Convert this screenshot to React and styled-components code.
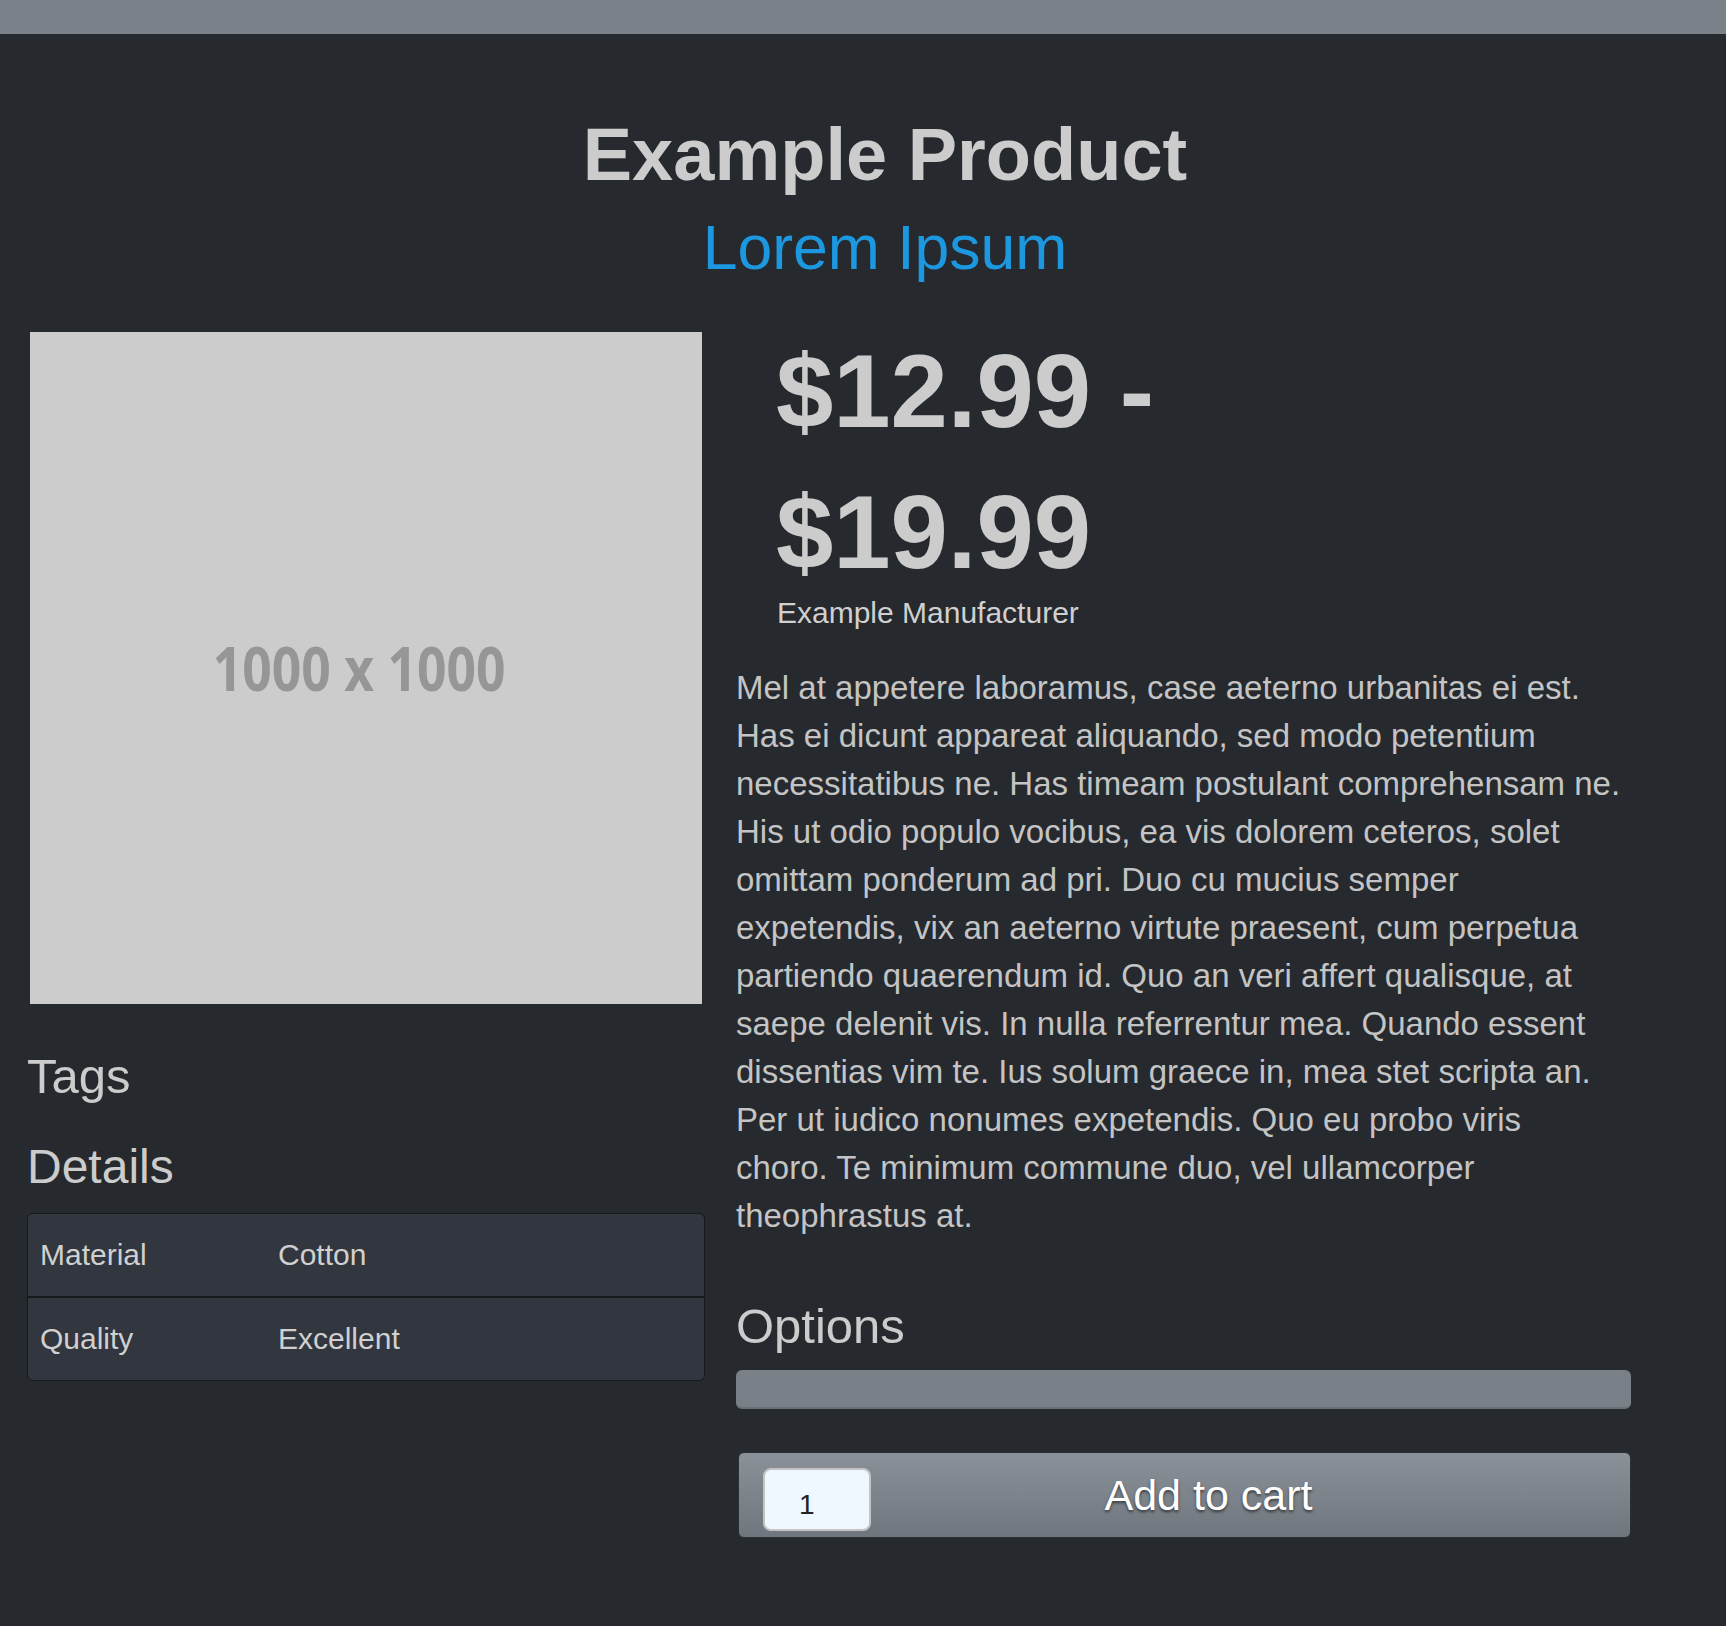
import styled, { createGlobalStyle } from "styled-components"

const GlobalStyle = createGlobalStyle`
html, body {
  margin:0;
  padding:0;
  background-color:#26292e;
}
body {
  font-family:"Liberation Sans", Arial, Helvetica, sans-serif;
  color:#cccccc;
}
`

const TopBar = styled.div`
height:34px;
background-color:#7b8189;
`

const Header = styled.header`
padding:81px 0 0 44px;
text-align:center;
`

const Title = styled.h1`
margin:0;
font-size:74px;
line-height:80px;
font-weight:700;
color:#cccccc;
`

const Subtitle = styled.h2`
margin:17px 0 0;
font-size:62.5px;
line-height:70px;
font-weight:400;
color:#1b98e0;
`

const Main = styled.main`
display:grid;
grid-template-columns:678px 895px;
column-gap:31px;
margin-top:39px;
padding:0 0 80px 27px;
`

const Column = styled.div`
display:flex;
flex-direction:column;
`

const ImageBox = styled.div`
width:672px;
height:672px;
margin:11px 0 0 3px;
background-color:#cccccc;
display:flex;
align-items:center;
justify-content:center;
`

const ImageLabel = styled.span`
display:inline-block;
margin-right:14px;
font-family:"Open Sans", sans-serif;
font-weight:700;
font-size:60px;
color:#969696;
transform:scaleX(0.86);
`

const SectionTitle = styled.h3`
margin:${({ $gap }) => $gap}px 0 0;
font-size:${({ $size }) => $size || 49}px;
line-height:54px;
font-weight:300;
color:#cccccc;
`

const Table = styled.div`
margin-top:19px;
border:1px solid #18191c;
border-radius:6px;
overflow:hidden;
background-color:#32363e;
`

const Row = styled.div`
display:grid;
grid-template-columns:238px 1fr;
height:82px;
line-height:82px;
font-size:30px;
color:#d0d0d0;
padding-left:12px;
& + & {
  border-top:2px solid #18191c;
}
`

const Price = styled.div`
max-width:420px;
padding-left:40px;
font-size:103px;
line-height:141px;
font-weight:700;
color:#cccccc;
`

const Maker = styled.div`
padding-left:41px;
font-size:30px;
line-height:20px;
color:#d0d0d0;
`

const Description = styled.p`
margin:41px 0 0;
font-size:33px;
line-height:48px;
color:#c4c4c4;
`

const Select = styled.div`
margin-top:17px;
height:37px;
border-radius:6px;
background-color:#7a8087;
border-bottom:2px solid #6a6f76;
`

const CartButton = styled.button`
margin-top:43px;
display:flex;
align-items:center;
height:86px;
width:893px;
margin-left:2px;
padding:0 0 0 24px;
border:1px solid #2c2f34;
border-radius:6px;
background:linear-gradient(to bottom, #8b9198, #70767d);
font-family:"Liberation Sans", Arial, sans-serif;
cursor:pointer;
`

const Qty = styled.input`
box-sizing:border-box;
width:108px;
height:63px;
margin-top:8px;
padding:12px 0 0 34px;
border:2px solid #c4c4c4;
border-radius:8px;
background-color:#eff7ff;
font-family:"Liberation Sans", Arial, sans-serif;
font-size:28px;
color:#222;
outline:none;
`

const CartLabel = styled.span`
flex:1;
padding-right:84px;
text-align:center;
font-size:43px;
color:#ffffff;
text-shadow:0 2px 3px rgba(0,0,0,0.55);
`

const details = [
    { name: "Material", value: "Cotton" },
    { name: "Quality", value: "Excellent" },
]

const textStart = "Mel at appetere laboramus, case aeterno urbanitas ei est. Has ei dicunt appareat aliquando, sed modo petentium necessitatibus ne. Has timeam postulant comprehensam ne. His ut odio populo vocibus, ea vis dolorem ceteros, solet omittam ponderum ad pri. Duo cu mucius semper expetendis, vix an aeterno virtute praesent, cum perpetua partiendo quaerendum id. Quo an veri affert qualisque, at saepe delenit vis. In nulla referrentur mea. Quando essent dissentias vim te. Ius solum graece in, mea stet scripta an. Per ut iudico nonumes expetendis. Quo eu probo viris"
const textEnd = "choro. Te minimum commune duo, vel ullamcorper theophrastus at."

export default function App() {
    return (
        <>
            <GlobalStyle />
            <TopBar />
            <Header>
                <Title>Example Product</Title>
                <Subtitle>Lorem Ipsum</Subtitle>
            </Header>
            <Main>
                <Column>
                    <ImageBox>
                        <ImageLabel>1000 x 1000</ImageLabel>
                    </ImageBox>
                    <SectionTitle $gap={45}>Tags</SectionTitle>
                    <SectionTitle $gap={37} $size={48}>Details</SectionTitle>
                    <Table>
                        {details.map(d => (
                            <Row key={d.name}>
                                <span>{d.name}</span>
                                <span>{d.value}</span>
                            </Row>
                        ))}
                    </Table>
                </Column>
                <Column>
                    <Price>$12.99 - $19.99</Price>
                    <Maker>Example Manufacturer</Maker>
                    <Description>
                        {textStart}
                        <br />
                        {textEnd}
                    </Description>
                    <SectionTitle $gap={59}>Options</SectionTitle>
                    <Select />
                    <CartButton>
                        <Qty defaultValue="1" />
                        <CartLabel>Add to cart</CartLabel>
                    </CartButton>
                </Column>
            </Main>
        </>
    )
}
